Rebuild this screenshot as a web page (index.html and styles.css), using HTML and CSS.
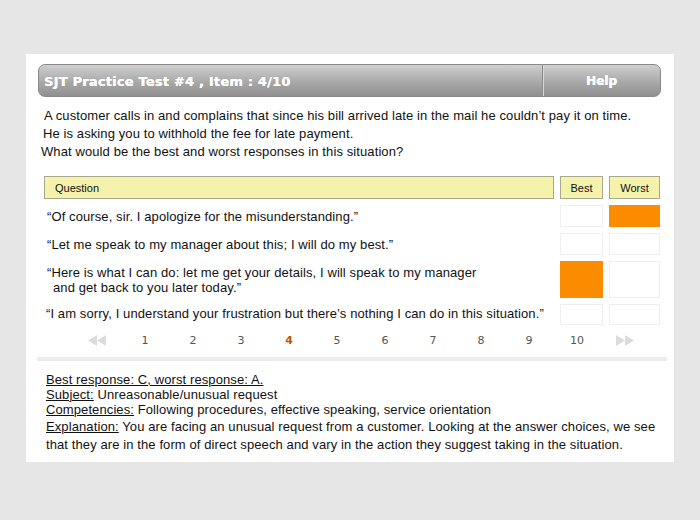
FILE: index.html
```html
<!DOCTYPE html>
<html>
<head>
<meta charset="utf-8">
<link rel="stylesheet" href="styles.css">
</head>
<body>
<div class="panel">
  <div class="header">
    <div class="title">SJT Practice Test #4 , Item : 4/10</div>
    <div class="help">Help</div>
  </div>
  <div class="prompt">
    <div class="l1">A customer calls in and complains that since his bill arrived late in the mail he couldn’t pay it on time.</div>
    <div class="l2">He is asking you to withhold the fee for late payment.</div>
    <div class="l3">What would be the best and worst responses in this situation?</div>
  </div>
  <div class="grid">
    <div class="hcell hq">Question</div>
    <div class="hcell hc">Best</div>
    <div class="hcell hc">Worst</div>

    <div class="q r1">“Of course, sir. I apologize for the misunderstanding.”</div>
    <div class="box"></div>
    <div class="box sel"></div>

    <div class="q r2">“Let me speak to my manager about this; I will do my best.”</div>
    <div class="box"></div>
    <div class="box"></div>

    <div class="q r3">“Here is what I can do: let me get your details, I will speak to my manager<br><span class="ind">and get back to you later today.”</span></div>
    <div class="box sel"></div>
    <div class="box"></div>

    <div class="q r4">“I am sorry, I understand your frustration but there’s nothing I can do in this situation.”</div>
    <div class="box"></div>
    <div class="box"></div>
  </div>
  <div class="pager">
    <span class="pg arrow"><svg width="20" height="11" viewBox="0 0 20 11"><polygon points="10,0 10,11 1,5.5" fill="#dcdcdc"/><polygon points="19,0 19,11 10,5.5" fill="#dcdcdc"/></svg></span>
    <span class="pg">1</span>
    <span class="pg">2</span>
    <span class="pg">3</span>
    <span class="pg cur">4</span>
    <span class="pg">5</span>
    <span class="pg">6</span>
    <span class="pg">7</span>
    <span class="pg">8</span>
    <span class="pg">9</span>
    <span class="pg">10</span>
    <span class="pg arrow"><svg width="20" height="11" viewBox="0 0 20 11"><polygon points="1,0 1,11 10,5.5" fill="#dcdcdc"/><polygon points="10,0 10,11 19,5.5" fill="#dcdcdc"/></svg></span>
  </div>
  <div class="sep"></div>
  <div class="answer">
    <div><u>Best response: C, worst response: A.</u></div>
    <div><u>Subject:</u> Unreasonable/unusual request</div>
    <div><u>Competencies:</u> Following procedures, effective speaking, service orientation</div>
    <div class="expl"><u>Explanation:</u> You are facing an unusual request from a customer. Looking at the answer choices, we see that they are in the form of direct speech and vary in the action they suggest taking in the situation.</div>
  </div>
</div>
</body>
</html>
```
FILE: styles.css
```css
html, body {
  margin: 0;
  padding: 0;
  background: #e6e6e6;
}
body {
  font-family: "Liberation Sans", Arial, sans-serif;
  color: #111;
}
.panel {
  margin: 54px 0 0 26px;
  width: 648px;
  height: 408px;
  background: #fff;
  box-sizing: border-box;
  padding-top: 10px;
  display: flex;
  flex-direction: column;
}
.header {
  margin-left: 12px;
  width: 623px;
  height: 33px;
  box-sizing: border-box;
  border: 1px solid #8a8a8a;
  border-radius: 7px;
  background: linear-gradient(#cfcfcf, #a9a9a9 55%, #8f8f8f);
  display: flex;
  align-items: center;
  color: #fff;
  font-family: "DejaVu Sans", Verdana, sans-serif;
  font-weight: bold;
}
.title {
  flex: 1;
  padding-left: 5px;
  padding-top: 1px;
  font-size: 13px;
  letter-spacing: 0.2px;
  text-shadow: 0.3px 0 0 #fff, 0 0 1px rgba(0,0,0,0.15);
}
.help {
  width: 118px;
  height: 100%;
  border-left: 1px solid #8a8a8a;
  box-shadow: inset 1px 0 0 #d8d8d8;
  display: flex;
  align-items: center;
  justify-content: center;
  font-size: 12px;
  text-shadow: 0.3px 0 0 #fff;
  box-sizing: border-box;
}
.prompt {
  margin-top: 10px;
  font-size: 13px;
  line-height: 18px;
  letter-spacing: 0.1px;
}
.prompt .l1 { padding-left: 18px; }
.prompt .l2 { padding-left: 17px; }
.prompt .l3 { padding-left: 15px; }
.grid {
  margin-top: 15px;
  margin-left: 18px;
  display: grid;
  grid-template-columns: 510px 43px 51px;
  grid-template-rows: 23px 22px 22px 37px 21px;
  column-gap: 6px;
  row-gap: 6px;
}
.hcell {
  background: #f5f3ab;
  border: 1px solid #a8a890;
  box-sizing: border-box;
  font-size: 11px;
  display: flex;
  align-items: center;
}
.hq { padding-left: 10px; }
.hc { justify-content: center; }
.q {
  font-size: 13px;
  line-height: 15px;
  letter-spacing: 0.1px;
  display: flex;
  flex-direction: column;
  justify-content: center;
  padding-left: 3px;
}
.q.r4 { padding-left: 2px; padding-bottom: 2px; }
.ind { padding-left: 6px; }
.box {
  border: 1px solid #efefef;
  box-sizing: border-box;
}
.box.sel {
  background: #fb8c00;
  border-color: #fb8c00;
}
.pager {
  margin-top: 6px;
  margin-left: 47px;
  display: flex;
  height: 18px;
  align-items: center;
  font-family: "DejaVu Sans", Verdana, sans-serif;
  font-size: 11px;
  color: #555;
}
.pg {
  width: 48px;
  text-align: center;
  display: flex;
  justify-content: center;
}
.pg.cur {
  color: #b85a00;
  font-weight: bold;
}
.pg.arrow svg { display: block; }
.sep {
  margin-top: 8px;
  margin-left: 11px;
  width: 630px;
  height: 4px;
  background: #ececec;
}
.answer {
  margin-top: 11px;
  padding-left: 20px;
  padding-right: 16px;
  font-size: 13px;
  line-height: 15px;
  letter-spacing: 0.1px;
}
.answer .expl {
  line-height: 18px;
  margin-top: 1px;
}
u {
  text-decoration-thickness: 1px;
  text-underline-offset: 1px;
}
```
